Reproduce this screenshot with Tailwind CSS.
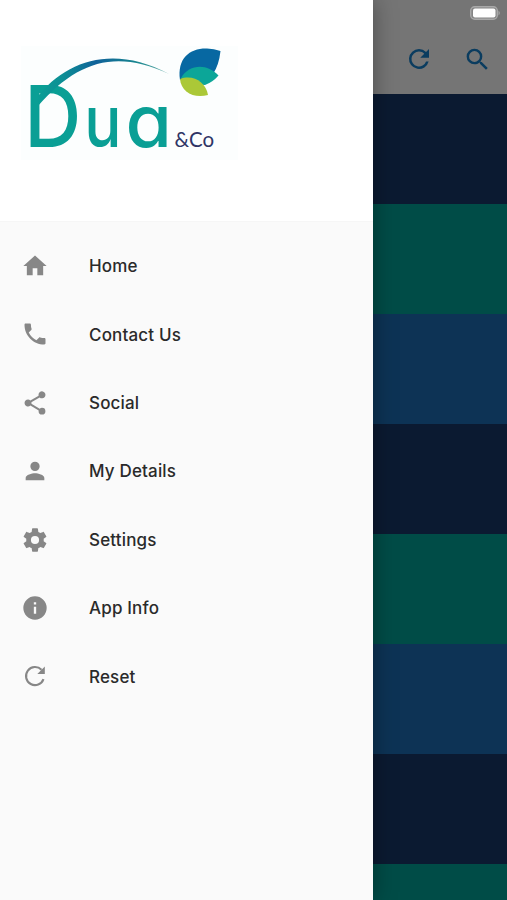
<!DOCTYPE html>
<html lang="en">
<head>
  <meta charset="UTF-8">
  <meta name="viewport" content="width=device-width, initial-scale=1.0">
  <title>Dua &amp; Co</title>
  <script src="https://cdn.jsdelivr.net/npm/@tailwindcss/browser@4"></script>
</head>
<body class="relative w-[507px] h-[900px] overflow-hidden bg-[#757575] font-['Inter',sans-serif]">

  <!-- Page behind the drawer -->
  <main class="flex flex-col h-full pl-[372px]">
    <header class="flex flex-col h-[93.6px] shrink-0 bg-[#757575]">
      <div class="flex justify-end h-[26px] pr-[6px] pt-[6px]">
        <svg class="w-[31px] h-[14px]" viewBox="0 0 31 14">
          <rect x="0.7" y="0.7" width="26.6" height="12.6" rx="4" fill="#858585" stroke="#a9a9a9" stroke-width="1.4"/>
          <rect x="3" y="2.6" width="22.5" height="9" rx="2" fill="#fff"/>
          <path d="M28.5 4.5q2.6 2.5 0 5z" fill="#a9a9a9"/>
        </svg>
      </div>
      <div class="flex justify-end items-center gap-[29px] h-[66px] pr-[15px]">
        <svg class="w-[30px] h-[30px] fill-[#0a3c5f]" viewBox="0 0 24 24"><path d="M17.65 6.35A7.96 7.96 0 0 0 12 4a8 8 0 1 0 7.73 10h-2.08A6 6 0 1 1 12 6c1.66 0 3.14.69 4.22 1.78L13 11h7V4z"/></svg>
        <svg class="w-[29px] h-[29px] fill-[#0a3c5f]" viewBox="0 0 24 24"><path d="M15.5 14h-.79l-.28-.27A6.47 6.47 0 0 0 16 9.5 6.5 6.5 0 1 0 9.5 16c1.61 0 3.09-.59 4.23-1.57l.27.28v.79l5 4.99L20.49 19zm-6 0a4.5 4.5 0 1 1 0-9 4.5 4.5 0 0 1 0 9z"/></svg>
      </div>
    </header>
    <div class="h-[110px] shrink-0 bg-[#0b1a31]"></div>
    <div class="h-[110px] shrink-0 bg-[#004c47]"></div>
    <div class="h-[110px] shrink-0 bg-[#0d3355]"></div>
    <div class="h-[110px] shrink-0 bg-[#0b1a31]"></div>
    <div class="h-[110px] shrink-0 bg-[#004c47]"></div>
    <div class="h-[110px] shrink-0 bg-[#0d3355]"></div>
    <div class="h-[110px] shrink-0 bg-[#0b1a31]"></div>
    <div class="h-[37px] shrink-0 bg-[#004c47]"></div>
  </main>

  <!-- Drawer -->
  <aside class="absolute inset-y-0 left-0 w-[372.5px] bg-[#fafafa] shadow-[0_0_22px_rgba(0,0,0,0.35)]">
    <div class="h-[222px] bg-white border-b border-[#f6f6f6]">
      <svg class="w-[260px] h-[180px]" viewBox="0 0 260 180">
        <defs>
          <linearGradient id="swoosh" x1="0" x2="1">
            <stop offset="0" stop-color="#0a9f95"/>
            <stop offset="0.2" stop-color="#0d8f95"/>
            <stop offset="0.45" stop-color="#10629a"/>
            <stop offset="0.75" stop-color="#17858f"/>
            <stop offset="1" stop-color="#6fb3ad"/>
          </linearGradient>
        </defs>
        <rect x="21" y="46" width="217" height="114" fill="#fcfefe"/>
        <g fill="#0a9f95" font-family="Inter, sans-serif" style="font-feature-settings: 'cv11'">
          <text transform="translate(24.3 147) scale(.93 1)" font-size="85" font-weight="500">D</text>
          <text transform="translate(84.3 147) scale(.86 1)" font-size="72" font-weight="500">u</text>
          <text transform="translate(125.6 147) scale(1.03 1)" font-size="73" font-weight="500">a</text>
        </g>
        <path d="M36 99C66 59 115 45 169 74C116 49 77 61 38 106z" fill="url(#swoosh)"/>
        <path d="M180 80C177 58 190 48 207 48.5Q214 48.5 220.5 51Q219 65 213 74L196 82z" fill="#0768a2"/>
        <path d="M181 78C189 64 207 63 218.5 75.5Q213 82 205 85L190 84z" fill="#0ca698"/>
        <path d="M180 79C193 74 206 82 208 95C194 99 181 92 180 79z" fill="#abc837"/>
        <text x="174.5" y="147" font-family="Lato, sans-serif" font-size="20.5" fill="#2f3566">&amp;Co</text>
      </svg>
    </div>

    <nav class="flex flex-col pt-[9.8px] text-[17px] font-medium tracking-[0.17px] text-[#2a2a2a]">
      <a class="flex items-center h-[68.4px] pl-[21px] gap-[40px]">
        <svg class="w-[28px] h-[28px] fill-[#878787]" viewBox="0 0 24 24"><path d="M10 20v-6h4v6h5v-8h3L12 3 2 12h3v8z"/></svg>
        <span class="pt-[2px]">Home</span>
      </a>
      <a class="flex items-center h-[68.4px] pl-[21px] gap-[40px]">
        <svg class="w-[28px] h-[28px] fill-[#878787]" viewBox="0 0 24 24"><path d="M6.62 10.79a15.05 15.05 0 0 0 6.59 6.59l2.2-2.2c.27-.27.67-.36 1.02-.24 1.12.37 2.33.57 3.57.57.55 0 1 .45 1 1V20c0 .55-.45 1-1 1C10.61 21 3 13.39 3 4c0-.55.45-1 1-1h3.5c.55 0 1 .45 1 1 0 1.25.2 2.45.57 3.57.11.35.03.74-.25 1.02z"/></svg>
        <span class="pt-[2px]">Contact Us</span>
      </a>
      <a class="flex items-center h-[68.4px] pl-[21px] gap-[40px]">
        <svg class="w-[28px] h-[28px] fill-[#878787]" viewBox="0 0 24 24"><path d="M18 16.08c-.76 0-1.44.3-1.96.77L8.91 12.7c.05-.23.09-.46.09-.7s-.04-.47-.09-.7l7.05-4.11A2.99 2.99 0 1 0 15 5c0 .24.04.47.09.7L8.04 9.81A2.99 2.99 0 0 0 3 12a3 3 0 0 0 5.04 2.19l7.12 4.16c-.05.21-.08.43-.08.65A2.92 2.92 0 1 0 18 16.08z"/></svg>
        <span class="pt-[2px]">Social</span>
      </a>
      <a class="flex items-center h-[68.4px] pl-[21px] gap-[40px]">
        <svg class="w-[28px] h-[28px] fill-[#878787]" viewBox="0 0 24 24"><path d="M12 12a4 4 0 1 0 0-8 4 4 0 0 0 0 8zm0 2c-2.67 0-8 1.34-8 4v2h16v-2c0-2.66-5.33-4-8-4z"/></svg>
        <span class="pt-[2px]">My Details</span>
      </a>
      <a class="flex items-center h-[68.4px] pl-[21px] gap-[40px]">
        <svg class="w-[28px] h-[28px] fill-[#878787]" viewBox="0 0 24 24"><path d="M19.43 12.98c.04-.32.07-.64.07-.98s-.03-.66-.07-.98l2.11-1.65c.19-.15.24-.42.12-.64l-2-3.46c-.12-.22-.39-.3-.61-.22l-2.49 1c-.52-.4-1.08-.73-1.69-.98l-.38-2.65A.488.488 0 0 0 14 2h-4c-.25 0-.46.18-.49.42l-.38 2.65c-.61.25-1.17.59-1.69.98l-2.49-1c-.23-.09-.49 0-.61.22l-2 3.46c-.13.22-.07.49.12.64l2.11 1.65c-.04.32-.07.65-.07.98s.03.66.07.98l-2.11 1.65c-.19.15-.24.42-.12.64l2 3.46c.12.22.39.3.61.22l2.49-1c.52.4 1.08.73 1.69.98l.38 2.65c.03.24.24.42.49.42h4c.25 0 .46-.18.49-.42l.38-2.65c.61-.25 1.17-.59 1.69-.98l2.49 1c.23.09.49 0 .61-.22l2-3.46c.12-.22.07-.49-.12-.64zM12 15.5a3.5 3.5 0 1 1 0-7 3.5 3.5 0 0 1 0 7z"/></svg>
        <span class="pt-[2px]">Settings</span>
      </a>
      <a class="flex items-center h-[68.4px] pl-[21px] gap-[40px]">
        <svg class="w-[28px] h-[28px] fill-[#878787]" viewBox="0 0 24 24"><path d="M12 2a10 10 0 1 0 0 20 10 10 0 0 0 0-20zm1 15h-2v-6h2zm0-8h-2V7h2z"/></svg>
        <span class="pt-[2px]">App Info</span>
      </a>
      <a class="flex items-center h-[68.4px] pl-[21px] gap-[40px]">
        <svg class="w-[28px] h-[28px]" viewBox="0 0 28 28">
          <path d="M22.5 17.1A9 9 0 1 1 20.5 7.8" fill="none" stroke="#878787" stroke-width="2.1"/>
          <path d="M23.8 4.6v7.5h-7.5z" fill="#878787"/>
        </svg>
        <span class="pt-[2px]">Reset</span>
      </a>
    </nav>
  </aside>

</body>
</html>
